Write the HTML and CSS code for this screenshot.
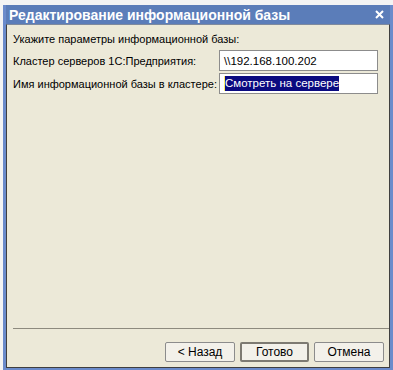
FILE: index.html
```html
<!DOCTYPE html>
<html lang="ru">
<head>
    <meta charset="UTF-8">
    <title>Редактирование информационной базы</title>
    <link rel="stylesheet" href="styles.css">
</head>
<body>
    <div class="window">
        <div class="titlebar">
            <span class="title">Редактирование информационной базы</span>
            <button class="close" title="Закрыть">
                <svg width="9" height="9" viewBox="0 0 9 9">
                    <path d="M1 1 L8 8 M8 1 L1 8" stroke="#fff" stroke-width="2" fill="none"/>
                </svg>
            </button>
        </div>

        <div class="dialog">
            <div class="form">
                <p class="intro">Укажите параметры информационной базы:</p>
                <div class="fields">
                    <label for="cluster">Кластер серверов 1С:Предприятия:</label>
                    <div class="input" id="cluster">\\192.168.100.202</div>

                    <label for="ibname">Имя информационной базы в кластере:</label>
                    <div class="input focused" id="ibname"><span class="caret"></span><span class="selected">Смотреть на сервере</span></div>
                </div>
            </div>

            <hr class="separator">

            <div class="buttons">
                <button class="btn">&lt; Назад</button>
                <button class="btn default">Готово</button>
                <button class="btn">Отмена</button>
            </div>
        </div>
    </div>
</body>
</html>
```

FILE: styles.css
```css
body {
    margin: 0;
    background: #f4f4f4;
    font-family: "Liberation Sans", Arial, sans-serif;
    font-size: 11px;
    color: #000;
}

.window {
    margin: 5px 0 0 3px;
    width: 390px;
    height: 365px;
    box-sizing: border-box;
    background: #6b8bcb;
    padding: 0 3px 2px 3px;
    display: flex;
    flex-direction: column;
}

.titlebar {
    height: 19px;
    background: #5b7db9;
    display: flex;
    align-items: center;
    justify-content: space-between;
    padding: 0 5px 0 3px;
}

.title {
    color: #fff;
    font-weight: bold;
    font-size: 14px;
}

.close {
    background: none;
    border: 0;
    padding: 0;
    width: 12px;
    height: 12px;
    display: flex;
    align-items: center;
    justify-content: center;
}

.dialog {
    flex: 1;
    background: #ece9d8;
    border: 1px solid #3f3f3f;
    border-top-color: #7e8a9e;
    display: flex;
    flex-direction: column;
}

.form {
    flex: 1;
    padding: 8px 0 0 6px;
}

.intro {
    margin: 0 0 4px;
    line-height: 13px;
}

.fields {
    display: grid;
    grid-template-columns: 206px 159px;
    row-gap: 2px;
    align-items: center;
}

.input {
    height: 21px;
    box-sizing: border-box;
    border: 1px solid #8c8c8c;
    background: #fff;
    padding: 0 4px;
    display: flex;
    align-items: center;
    font-size: 11.5px;
}

.caret {
    width: 1px;
    height: 15px;
    background: #ffee66;
}

.selected {
    background: #0a0a80;
    color: #fff;
    line-height: 15px;
}

.separator {
    margin: 0 0 13px 6px;
    width: 376px;
    border: 0;
    border-top: 1px solid #8d8a7e;
    height: 0;
}

.buttons {
    display: flex;
    justify-content: flex-end;
    gap: 5px;
    padding: 0 5px 5px 0;
}

.btn {
    width: 70px;
    height: 20px;
    box-sizing: border-box;
    border: 1px solid #8c8c8c;
    border-radius: 2px;
    background: #f3f1ea;
    font-family: "Liberation Sans", Arial, sans-serif;
    font-size: 12px;
    padding: 0;
}

.btn.default {
    border: 2px solid #7d7a72;
    width: 69px;
}
```
